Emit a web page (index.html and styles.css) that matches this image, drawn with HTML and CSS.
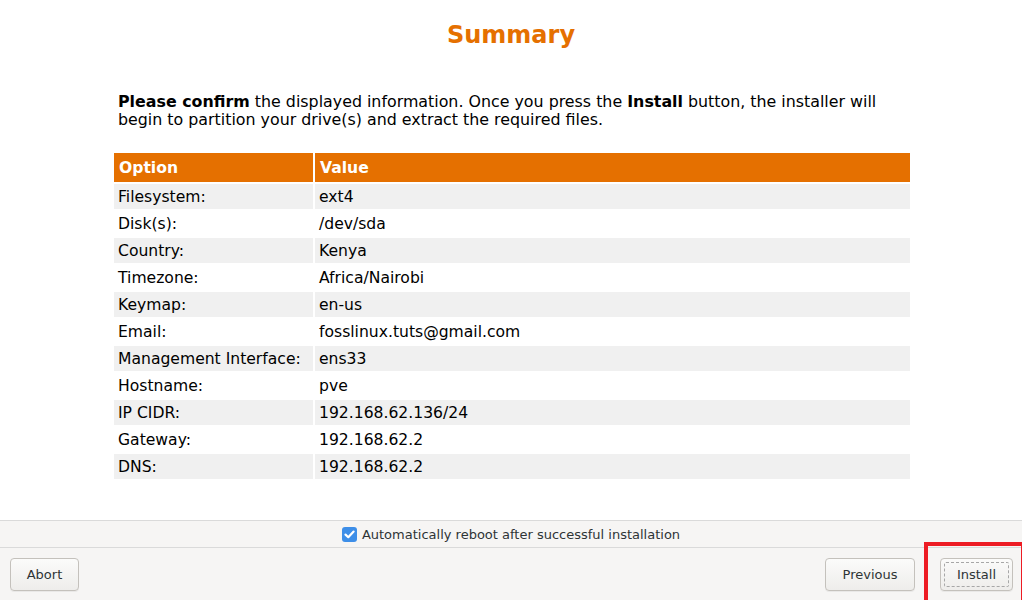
FILE: index.html
```html
<!DOCTYPE html>
<html>
<head>
<meta charset="utf-8">
<link rel="stylesheet" href="styles.css">
</head>
<body>
<div class="page">
  <main class="main">
    <h1 class="title">Summary</h1>
    <div class="content">
      <p class="intro"><b>Please confirm</b> the displayed information. Once you press the <b>Install</b> button, the installer will begin to partition your drive(s) and extract the required files.</p>
      <table class="summary">
        <thead>
          <tr><th class="col-opt">Option</th><th>Value</th></tr>
        </thead>
        <tbody>
          <tr><td>Filesystem:</td><td>ext4</td></tr>
          <tr><td>Disk(s):</td><td>/dev/sda</td></tr>
          <tr><td>Country:</td><td>Kenya</td></tr>
          <tr><td>Timezone:</td><td>Africa/Nairobi</td></tr>
          <tr><td>Keymap:</td><td>en-us</td></tr>
          <tr><td>Email:</td><td>fosslinux.tuts@gmail.com</td></tr>
          <tr><td>Management Interface:</td><td>ens33</td></tr>
          <tr><td>Hostname:</td><td>pve</td></tr>
          <tr><td>IP CIDR:</td><td>192.168.62.136/24</td></tr>
          <tr><td>Gateway:</td><td>192.168.62.2</td></tr>
          <tr><td>DNS:</td><td>192.168.62.2</td></tr>
        </tbody>
      </table>
    </div>
  </main>
  <div class="reboot-bar">
    <label class="check">
      <span class="checkbox"><svg width="15" height="15" viewBox="0 0 15 15"><path d="M3.5 7.6 L6.3 10.2 L11.6 4.6" fill="none" stroke="#fff" stroke-width="2.2" stroke-linecap="round" stroke-linejoin="round"/></svg></span>
      <span>Automatically reboot after successful installation</span>
    </label>
  </div>
  <footer class="buttons">
    <button class="btn btn-abort">Abort</button>
    <div class="spacer"></div>
    <button class="btn btn-prev">Previous</button>
    <div class="install-wrap">
      <button class="btn btn-install"><span class="focus">Install</span></button>
    </div>
  </footer>
</div>
</body>
</html>
```

FILE: styles.css
```css
html, body {
  margin: 0;
  padding: 0;
}
body {
  font-family: "DejaVu Sans", sans-serif;
  background: #ffffff;
  color: #000;
}
.page {
  width: 1022px;
  height: 600px;
  display: flex;
  flex-direction: column;
  overflow: hidden;
}
.main {
  height: 520px;
  flex-shrink: 0;
  background: #ffffff;
  box-sizing: border-box;
  padding-top: 21px;
}
.title {
  margin: 0;
  font-size: 24px;
  line-height: 28px;
  font-weight: bold;
  text-align: center;
  color: #e57000;
}
.content {
  margin: 44px 0 0 114px;
  width: 796px;
}
.intro {
  margin: 0;
  padding-left: 4px;
  font-size: 15.85px;
  line-height: 18px;
  color: #000;
}
.summary {
  margin: 22px 0 0 -2px;
  width: 800px;
  border-collapse: separate;
  border-spacing: 2px;
  font-size: 15.6px;
}
.summary th {
  background: #e57000;
  color: #fff;
  text-align: left;
  font-weight: bold;
  height: 29px;
  padding: 1px 0 0 5px;
  box-sizing: border-box;
}
.summary .col-opt {
  width: 199px;
}
.summary td {
  height: 25px;
  padding: 1px 0 0 4px;
  box-sizing: border-box;
  line-height: 24px;
}
.summary tbody tr:nth-child(odd) td {
  background: #f0f0f0;
}
.reboot-bar {
  height: 26px;
  flex-shrink: 0;
  background: #f6f5f4;
  border-top: 1px solid #dadada;
  border-bottom: 1px solid #dadada;
  display: flex;
  justify-content: center;
  align-items: center;
}
.check {
  display: flex;
  align-items: center;
  gap: 5px;
  font-size: 13px;
  color: #2e3436;
}
.checkbox {
  width: 15px;
  height: 15px;
  border-radius: 3px;
  background: #3d8ee8;
  display: flex;
}
.buttons {
  flex: 1 0 auto;
  background: #f6f5f4;
  display: flex;
  align-items: flex-start;
  padding: 10px 0 0 10px;
}
.spacer {
  flex: 1;
}
.btn {
  font-family: "DejaVu Sans", sans-serif;
  font-size: 13px;
  color: #2e3436;
  height: 33px;
  border: 1px solid #c4c1bc;
  border-radius: 4px;
  background: linear-gradient(#fbfbfa, #eeedeb);
  box-shadow: 0 1px 0 rgba(0,0,0,0.05);
  padding: 0;
}
.btn-abort {
  width: 69px;
}
.btn-prev {
  width: 90px;
}
.install-wrap {
  margin: -16px 0 0 9px;
  border: 4px solid #ed1c24;
  border-right-width: 1px;
  border-bottom: none;
  padding: 12px 8px 0 12px;
  height: 46px;
}
.btn-install {
  width: 73px;
  display: flex;
  align-items: stretch;
  padding: 3px;
  box-sizing: border-box;
}
.focus {
  flex: 1;
  border: 1px dashed #a7a7a7;
  border-radius: 2px;
  display: flex;
  align-items: center;
  justify-content: center;
}
```
